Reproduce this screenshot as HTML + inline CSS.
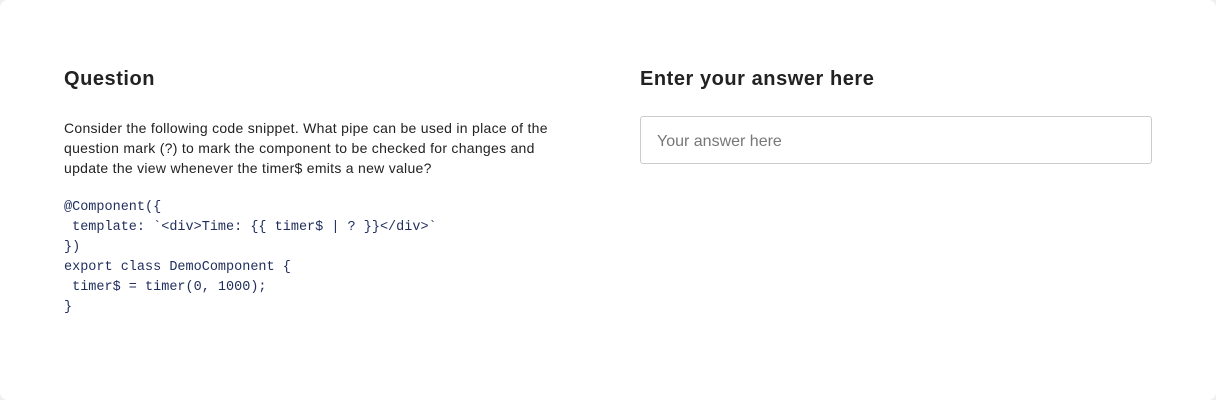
<!DOCTYPE html>
<html><head><style>
html,body{margin:0;padding:0;background:#f0f0f0;}
.card{position:absolute;left:0;top:0;width:1216px;height:400px;background:#fff;border-radius:8px;}
h2{position:absolute;margin:0;font:bold 20px/28px "Liberation Sans",sans-serif;color:#222;letter-spacing:0.55px;}
p{position:absolute;left:64px;top:118px;width:496px;margin:0;font:14px/20px "Liberation Sans",sans-serif;color:#222;letter-spacing:0.28px;}
pre{position:absolute;left:64px;top:198px;margin:0;font:13.5px/20px "Liberation Mono",monospace;color:#1f2d5c;}
.in{position:absolute;left:640px;top:116px;width:510px;height:46px;border:1px solid #ccc;border-radius:3px;font:16px/50px "Liberation Sans",sans-serif;color:#777;box-sizing:content-box;}
.in span{padding-left:16px;}
</style></head><body>
<div class="card">
<h2 style="left:64px;top:65px">Question</h2>
<h2 style="left:640px;top:65px">Enter your answer here</h2>
<p>Consider the following code snippet. What pipe can be used in place of the question mark (?) to mark the component to be checked for changes and update the view whenever the timer$ emits a new value?</p>
<pre>@Component({
 template: `&lt;div&gt;Time: {{ timer$ | ? }}&lt;/div&gt;`
})
export class DemoComponent {
 timer$ = timer(0, 1000);
}</pre>
<div class="in"><span>Your answer here</span></div>
</div>
</body></html>
